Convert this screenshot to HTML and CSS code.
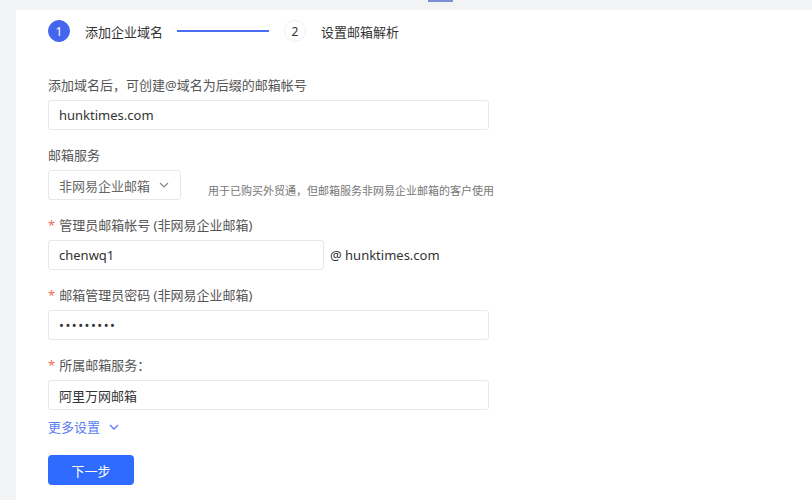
FILE: index.html
```html
<!DOCTYPE html>
<html lang="zh-CN">
<head>
<meta charset="utf-8">
<link rel="stylesheet" href="styles.css">
</head>
<body>
<div class="tabbar"><span class="tab-ind"></span></div>
<div class="card">
  <div class="steps">
    <span class="step-num active">1</span>
    <span class="step-text">添加企业域名</span>
    <span class="step-line"></span>
    <span class="step-num">2</span>
    <span class="step-text">设置邮箱解析</span>
  </div>
  <form class="form">
    <div class="group">
      <div class="label">添加域名后，可创建@域名为后缀的邮箱帐号</div>
      <div class="input wide">hunktimes.com</div>
    </div>
    <div class="group">
      <div class="label">邮箱服务</div>
      <div class="row">
        <div class="input select">非网易企业邮箱
          <svg class="chev" width="10" height="6" viewBox="0 0 10 6"><path d="M1 1l4 4 4-4" fill="none" stroke="#888" stroke-width="1.2"/></svg>
        </div>
        <span class="hint">用于已购买外贸通，但邮箱服务非网易企业邮箱的客户使用</span>
      </div>
    </div>
    <div class="group">
      <div class="label"><span class="req">*</span>管理员邮箱帐号 (非网易企业邮箱)</div>
      <div class="row">
        <div class="input mid">chenwq1</div>
        <span class="suffix">@ hunktimes.com</span>
      </div>
    </div>
    <div class="group">
      <div class="label"><span class="req">*</span>邮箱管理员密码 (非网易企业邮箱)</div>
      <div class="input wide pw">•••••••••</div>
    </div>
    <div class="group">
      <div class="label"><span class="req">*</span>所属邮箱服务：</div>
      <div class="input wide">阿里万网邮箱</div>
    </div>
    <div class="more">更多设置
      <svg class="chev" width="10" height="6" viewBox="0 0 10 6"><path d="M1 1l4 4 4-4" fill="none" stroke="#5b7cf5" stroke-width="1.3"/></svg>
    </div>
    <div class="btn">下一步</div>
  </form>
</div>
</body>
</html>
```
FILE: styles.css
```css
* { box-sizing: border-box; }
html, body { margin: 0; padding: 0; }
body {
  background: #f2f3f5;
  font-family: "Noto Sans", "Noto Sans CJK SC", sans-serif;
  color: #333;
  font-size: 13px;
  width: 812px;
  height: 500px;
  overflow: hidden;
}
.tabbar { height: 10px; position: relative; }
.tab-ind {
  position: absolute; left: 428px; top: 0; width: 25px; height: 2px;
  background: #7b8fd6;
}
.card {
  margin-left: 16px;
  background: #fff;
  height: 490px;
  padding: 10px 32px 0 32px;
}
.steps {
  display: flex; align-items: center; height: 22px;
}
.step-num {
  width: 22px; height: 22px; border-radius: 50%;
  display: flex; align-items: center; justify-content: center;
  font-size: 12px; color: #333;
  background: #fff; border: 1px solid #eef0f3;
}
.step-num.active { background: #4466ee; color: #fff; border-color: #4466ee; }
.step-text { margin-left: 15px; font-size: 13px; color: #333; }
.step-line {
  width: 92px; height: 2px; background: #4a6cf0;
  margin: 0 15px 0 14px;
}
.form { margin-top: 33px; }
.group { margin-bottom: 15px; }
.label {
  height: 20px; line-height: 20px; color: #555; margin-bottom: 5px;
  font-size: 13px;
}
.req { color: #f5695b; margin-right: 4px; }
.row { display: flex; align-items: center; }
.input {
  height: 30px; border: 1px solid #e6e8ec; border-radius: 3px;
  padding: 0 10px; display: flex; align-items: center;
  color: #333; font-size: 13px; background: #fff;
}
.wide { width: 441px; }
.mid { width: 276px; }
.select { width: 133px; justify-content: space-between; color: #666; }
.select .chev { margin-right: 1px; }
.hint { font-size: 11px; color: #777; margin-left: 27px; margin-top: 10px; }
.suffix { margin-left: 6px; font-size: 13px; color: #333; }
.pw { letter-spacing: 1.5px; font-size: 13px; }
.more {
  margin-top: -8px;
  height: 20px; line-height: 20px; color: #5b7cf5; font-size: 13px;
  display: flex; align-items: center; gap: 9px;
}
.btn {
  margin-top: 18px; width: 86px; height: 30px; border-radius: 4px;
  background: #2f6bff; color: #fff; font-size: 13px;
  display: flex; align-items: center; justify-content: center;
}
```
